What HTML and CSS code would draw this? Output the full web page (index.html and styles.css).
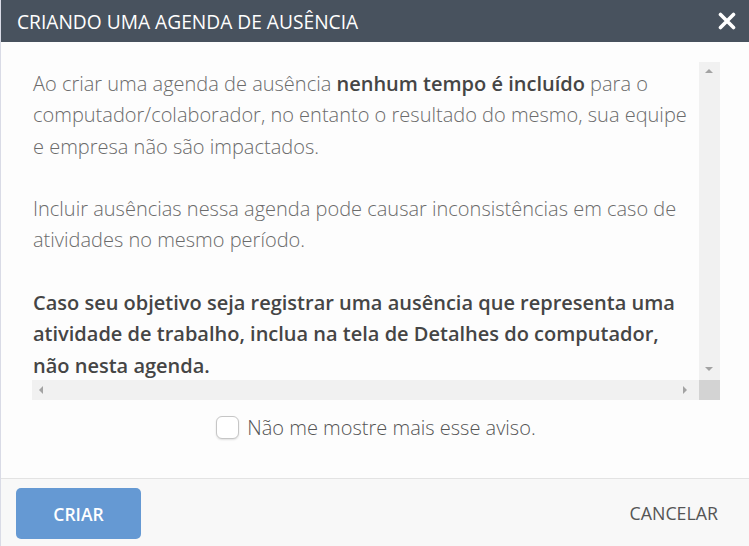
FILE: index.html
```html
<!DOCTYPE html>
<html lang="pt-BR">
<head>
<meta charset="utf-8">
<title>Criando uma agenda de ausência</title>
<link rel="stylesheet" href="styles.css">
</head>
<body>
<div class="dialog">
  <header class="dialog-header">
    <h1 class="dialog-title">CRIANDO UMA AGENDA DE AUSÊNCIA</h1>
    <button class="close-btn" aria-label="Fechar">
      <svg width="18" height="18" viewBox="0 0 18 18"><path d="M2.5 2.5 L15.5 15.5 M15.5 2.5 L2.5 15.5" stroke="#fff" stroke-width="3.6" stroke-linecap="round"/></svg>
    </button>
  </header>
  <main class="dialog-body">
    <div class="scroll-box">
      <div class="scroll-content">
        <p>Ao criar uma agenda de ausência <strong>nenhum tempo é incluído</strong> para o computador/colaborador, no entanto o resultado do mesmo, sua equipe e empresa não são impactados.</p>
        <p>Incluir ausências nessa agenda pode causar inconsistências em caso de atividades no mesmo período.</p>
        <p><strong>Caso seu objetivo seja registrar uma ausência que representa uma atividade de trabalho, inclua na tela de Detalhes do computador, não nesta agenda.</strong></p>
      </div>
      <div class="vbar">
        <span class="arrow arrow-up"></span>
        <span class="arrow arrow-down"></span>
      </div>
      <div class="hbar">
        <span class="arrow arrow-left"></span>
        <span class="arrow arrow-right"></span>
      </div>
      <div class="corner"></div>
    </div>
    <label class="check-row">
      <span class="checkbox"></span>
      <span class="check-label">Não me mostre mais esse aviso.</span>
    </label>
  </main>
  <footer class="dialog-footer">
    <button class="btn-primary">CRIAR</button>
    <button class="btn-link">CANCELAR</button>
  </footer>
</div>
</body>
</html>
```

FILE: styles.css
```css
* { box-sizing: border-box; }
html, body { margin: 0; padding: 0; }
body {
  width: 749px;
  height: 546px;
  overflow: hidden;
  background: #fdfdfd;
  font-family: "Open Sans", "Liberation Sans", sans-serif;
}
.dialog {
  display: flex;
  flex-direction: column;
  height: 546px;
  border-left: 1px solid #d9dbe6;
  background: #fdfdfd;
}
.dialog-header {
  height: 42px;
  flex: none;
  background: #48525e;
  display: flex;
  align-items: center;
  justify-content: space-between;
  padding: 0 13px 0 16px;
}
.dialog-title {
  margin: 0;
  color: #fff;
  font-size: 19.2px;
  font-weight: 400;
  letter-spacing: 0;
}
.close-btn {
  border: 0;
  background: none;
  padding: 0;
  width: 18px;
  height: 18px;
  display: flex;
}
.dialog-body {
  flex: 1;
  padding: 20px 29px 0 31px;
  display: flex;
  flex-direction: column;
}
.scroll-box {
  display: grid;
  grid-template-columns: 667px 21px;
  grid-template-rows: 318px 20px;
  width: 688px;
}
.scroll-content {
  overflow: hidden;
  padding: 6px 0 0 1px;
  font-size: 20px;
  line-height: 31.3px;
  color: #6b6b6b;
  font-weight: 300;
}
.scroll-content p { margin: 0 0 31.3px; }
.scroll-content p:last-child { margin: 0; }
.scroll-content strong { font-weight: 600; color: #454545; }
.vbar {
  background: #f1f1f1;
  position: relative;
}
.hbar {
  background: #f1f1f1;
  position: relative;
}
.corner { background: #d3d3d3; }
.arrow {
  position: absolute;
  width: 0;
  height: 0;
  border: 4px solid transparent;
}
.arrow-up { left: 6px; top: 7px; border-bottom: 4px solid #a3a3a3; border-top: 0; }
.arrow-down { left: 6px; bottom: 9px; border-top: 4px solid #a3a3a3; border-bottom: 0; }
.arrow-left { left: 7px; top: 6px; border-right: 4px solid #a3a3a3; border-left: 0; }
.arrow-right { right: 12px; top: 6px; border-left: 4px solid #a3a3a3; border-right: 0; }
.check-row {
  display: flex;
  align-items: center;
  justify-content: center;
  gap: 8px;
  margin-top: 14px;
}
.checkbox {
  width: 23px;
  height: 23px;
  border: 1px solid #c6c6c6;
  border-radius: 6px;
  background: #fff;
  box-shadow: 0 1px 2px rgba(0,0,0,0.12);
}
.check-label {
  font-size: 20px;
  font-weight: 300;
  color: #555;
}
.dialog-footer {
  height: 68px;
  flex: none;
  border-top: 1px solid #e3e3e3;
  background: #f8f8f8;
  display: flex;
  align-items: center;
  justify-content: space-between;
  padding: 0 31px 0 15px;
}
.btn-primary {
  width: 125px;
  height: 51px;
  border: 0;
  border-radius: 5px;
  background: #6599d3;
  color: #fff;
  font-family: inherit;
  font-size: 17.5px;
  font-weight: 600;
  margin-top: 2px;
}
.btn-link {
  border: 0;
  background: none;
  padding: 0;
  color: #555;
  font-family: inherit;
  font-size: 17.8px;
  font-weight: 400;
  margin-top: 0;
}
```
